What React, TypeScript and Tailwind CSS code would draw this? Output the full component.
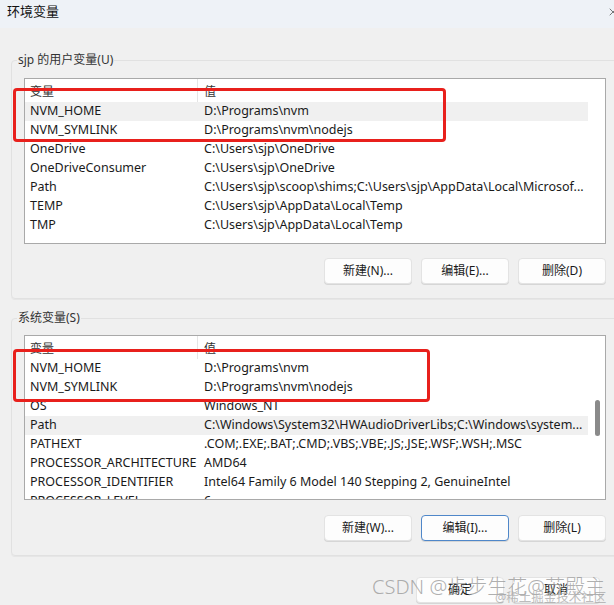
import { X } from 'lucide-react';

type Row = { name: string; value: string; hot?: boolean };

const userVars: Row[] = [
  { name: 'NVM_HOME', value: 'D:\\Programs\\nvm', hot: true },
  { name: 'NVM_SYMLINK', value: 'D:\\Programs\\nvm\\nodejs' },
  { name: 'OneDrive', value: 'C:\\Users\\sjp\\OneDrive' },
  { name: 'OneDriveConsumer', value: 'C:\\Users\\sjp\\OneDrive' },
  { name: 'Path', value: 'C:\\Users\\sjp\\scoop\\shims;C:\\Users\\sjp\\AppData\\Local\\Microsof...' },
  { name: 'TEMP', value: 'C:\\Users\\sjp\\AppData\\Local\\Temp' },
  { name: 'TMP', value: 'C:\\Users\\sjp\\AppData\\Local\\Temp' },
];

const systemVars: Row[] = [
  { name: 'NVM_HOME', value: 'D:\\Programs\\nvm' },
  { name: 'NVM_SYMLINK', value: 'D:\\Programs\\nvm\\nodejs' },
  { name: 'OS', value: 'Windows_NT' },
  { name: 'Path', value: 'C:\\Windows\\System32\\HWAudioDriverLibs;C:\\Windows\\system...', hot: true },
  { name: 'PATHEXT', value: '.COM;.EXE;.BAT;.CMD;.VBS;.VBE;.JS;.JSE;.WSF;.WSH;.MSC' },
  { name: 'PROCESSOR_ARCHITECTURE', value: 'AMD64' },
  { name: 'PROCESSOR_IDENTIFIER', value: 'Intel64 Family 6 Model 140 Stepping 2, GenuineIntel' },
  { name: 'PROCESSOR_LEVEL', value: '6' },
];

function VarList({ rows, height, scroll }: { rows: Row[]; height: string; scroll?: boolean }) {
  return (
    <div className={`flex border border-[#a9a9a9] bg-white overflow-hidden ${height}`}>
      <div className="flex-1 flex flex-col min-w-0">
        <div className="flex h-[23px] shrink-0 text-[12px] text-[#333]">
          <div className="w-[173px] pl-[5px] pt-[4px] border-r border-[#e5e5e5]">变量</div>
          <div className="pl-[6px] pt-[4px]">值</div>
        </div>
        {rows.map((r) => (
          <div
            key={r.name}
            className={`flex h-[19px] shrink-0 items-center text-[12.5px] text-[#1a1a1a] ${r.hot ? 'bg-[#f0f0f0]' : ''}`}
          >
            <div className="w-[173px] pl-[5px] whitespace-nowrap overflow-hidden">{r.name}</div>
            <div className="flex-1 min-w-0 pl-[6px] whitespace-nowrap overflow-hidden">{r.value}</div>
          </div>
        ))}
      </div>
      <div className="w-[17px] shrink-0 flex justify-center pt-[64px] pl-[2px]">
        {scroll && <div className="w-[5px] h-[36px] rounded-full bg-[#8a8a8a]" />}
      </div>
    </div>
  );
}

function Btn({ label, focus }: { label: string; focus?: boolean }) {
  return (
    <button
      className={`h-[26px] w-[88px] rounded-[4px] bg-[#fdfdfd] text-[12px] text-[#1a1a1a] shadow-[0_1px_0_#d6d6d6] border ${
        focus ? 'border-[#4f87c9]' : 'border-[#e3e3e3]'
      }`}
    >
      {label}
    </button>
  );
}

function Group({ title, children }: { title: string; children: React.ReactNode }) {
  return (
    <fieldset className="min-w-0 ml-[11px] mr-[-6px] border border-[#e1e1e1] rounded-[4px] pl-[12px] pr-[13px] pb-[14px] shadow-[0_1px_0_#e6e6e6]">
      <legend className="-ml-[7px] px-[1px] text-[12px] leading-[16px] text-[#333]">{title}</legend>
      {children}
    </fieldset>
  );
}

export default function App() {
  return (
    <div
      className="relative w-[614px] h-[605px] overflow-hidden bg-[#f0f0f0]"
      style={{ fontFamily: '"Noto Sans", "Noto Sans CJK SC", sans-serif' }}
    >
      <div className="h-[28px] flex items-center justify-between pl-[7px] bg-[#eef2f7] text-[13px] text-[#111]">
        <span className="-mt-[4px]">环境变量</span>
        <X className="w-[12px] h-[12px] -mr-[5px] -mt-[4px] text-[#222]" strokeWidth={1.2} />
      </div>

      <div className="pt-[24px] flex flex-col gap-[11px]">
        <Group title="sjp 的用户变量(U)">
          <div className="mt-[10px]">
            <VarList rows={userVars} height="h-[166px]" />
          </div>
          <div className="mt-[14px] flex justify-end gap-[9px]">
            <Btn label="新建(N)..." />
            <Btn label="编辑(E)..." />
            <Btn label="删除(D)" />
          </div>
        </Group>

        <Group title="系统变量(S)">
          <div className="mt-[9px]">
            <VarList rows={systemVars} height="h-[165px]" scroll />
          </div>
          <div className="mt-[15px] flex justify-end gap-[9px]">
            <Btn label="新建(W)..." />
            <Btn label="编辑(I)..." focus />
            <Btn label="删除(L)" />
          </div>
        </Group>

        <div className="mt-[10px] flex gap-[8px] pl-[416px]">
          <Btn label="确定" />
          <Btn label="取消" />
        </div>
      </div>

      {/* red annotation boxes */}
      <div className="absolute left-[13px] top-[88px] w-[433px] h-[54px] border-[3px] border-[#e8201c] rounded-[4px]" />
      <div className="absolute left-[13px] top-[349px] w-[417px] h-[53px] border-[3px] border-[#e8201c] rounded-[4px]" />

      {/* watermark */}
      <div className="absolute left-[372px] top-[572px] text-[20px] font-light text-[#9a9a9a]/80 whitespace-nowrap">
        CSDN @步步生花@苏殿主
      </div>
      <div className="absolute left-[495px] top-[589px] text-[12.5px] text-[#aaaaaa]/80 whitespace-nowrap">
        @稀土掘金技术社区
      </div>
    </div>
  );
}
